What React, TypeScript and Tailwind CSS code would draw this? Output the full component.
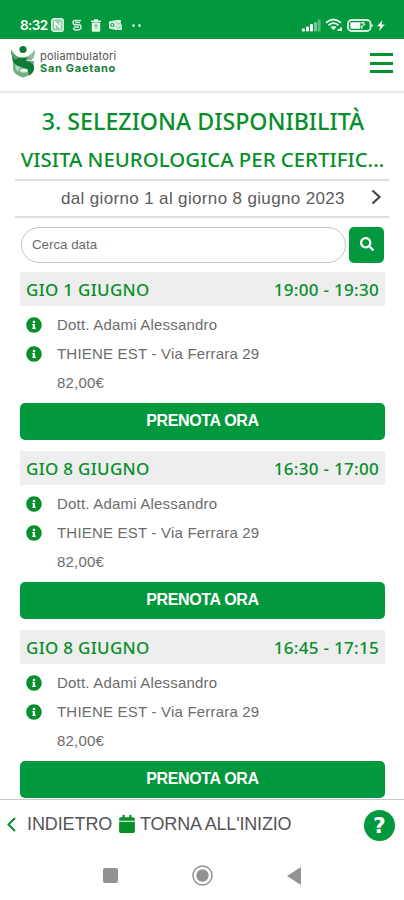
import { FaCalendar, FaInfoCircle, FaSearch } from 'react-icons/fa';

const slots = [
  { day: 'GIO 1 GIUGNO', time: '19:00 - 19:30' },
  { day: 'GIO 8 GIUGNO', time: '16:30 - 17:00' },
  { day: 'GIO 8 GIUGNO', time: '16:45 - 17:15' },
];

function StatusBar() {
  return (
    <div className="h-[39px] shrink-0 bg-[#02983d] flex items-center justify-between pl-5 pr-[19px] pt-[11px] text-white">
      <div className="flex items-center">
        <span className="w-[28px] font-['Inter'] text-[13.5px] leading-4 font-semibold tracking-[-0.6px] whitespace-nowrap">8:32</span>
        <svg className="ml-[3px]" width="13" height="14" viewBox="0 0 13 14" fill="none" stroke="#e3f6e8">
          <rect x=".8" y=".8" width="11.4" height="12.4" rx="2" fill="#8fcfa4" strokeWidth="1.4" />
          <path d="M4 10.5V4l5 6V3.5" stroke="#fff" strokeWidth="1.3" />
        </svg>
        <svg className="ml-[8px]" width="10" height="12" viewBox="0 0 10 12" fill="none" stroke="#d4efdc" strokeWidth="1.5">
          <path d="M9 1.5H3Q1 1.5 1 3.5T3 5.7h4q2 0 2 2.3t-3 3H3L1 9M3 3.6h5M2 8h5" />
        </svg>
        <svg className="ml-[9px]" width="10" height="13" viewBox="0 0 10 13" fill="#e3f6e8">
          <path d="M0 1.5h3V.3h4v1.2h3V3H0zM.8 3.5h8.4V12q0 .8-.8.8H1.6q-.8 0-.8-.8z" />
          <path d="M5 5v5M3.5 7.5 5 5.5l1.5 2" fill="none" stroke="#5dbc7c" />
        </svg>
        <svg className="ml-[8px]" width="13" height="12" viewBox="0 0 13 12" fill="#d4efdc">
          <path d="M0 2.5 7 1v10L0 9.5zM7 1h5v6H7zM7 7.5l6-2V11H7z" />
          <circle cx="3.4" cy="6" r="1.6" fill="none" stroke="#02983d" />
          <path d="m7 3 2.5 2.5L12 3M8 10l4-3" fill="none" stroke="#6cc287" strokeWidth=".9" />
        </svg>
        <span className="ml-[10px] flex gap-[3px]">
          <i className="size-[3px] rounded-full bg-[#bfe5c9]" />
          <i className="size-[3px] rounded-full bg-[#bfe5c9]" />
        </span>
      </div>
      <div className="flex items-center">
        <svg width="19" height="13" viewBox="0 0 19 13" fill="#fff">
          <rect x="0" y="9.5" width="3" height="3" rx="1" />
          <rect x="4" y="7.5" width="3" height="5" rx="1" />
          <rect x="8" y="5" width="3" height="7.5" rx="1" />
          <rect x="12" y="3" width="3" height="9.5" rx="1" opacity=".45" />
          <rect x="15.6" y=".5" width="3" height="12" rx="1" opacity=".35" />
        </svg>
        <svg className="ml-[4px]" width="18" height="14" viewBox="0 0 18 14" fill="none" stroke="#e6f6ea" strokeWidth="1.8">
          <path d="M1 4.7Q8.5-1.8 16 4.7M3.5 7.3q5-4.4 10 0" />
          <path d="m5.5 9 3 3.2 3-3.2q-3-2.2-6 0z" fill="#e6f6ea" stroke="none" />
          <path d="M12.5 12H16V9.5" strokeWidth="2" />
        </svg>
        <svg className="ml-[4px]" width="27" height="13" viewBox="0 0 27 13" fill="none">
          <rect x="1" y="1" width="22.5" height="11" rx="3.5" stroke="#d9f1df" strokeWidth="1.8" />
          <path d="M24.5 4.5q2.5 2 0 4z" fill="#fff" />
          <rect x="3.3" y="3.2" width="10" height="6.6" rx="1.2" fill="#fff" />
          <path d="m13.5 4 3-.5 1 2-3 2 .5 2.5" stroke="#d9f1df" strokeWidth="1.3" />
        </svg>
        <svg className="ml-[3px]" width="8" height="11" viewBox="0 0 8 11" fill="#e6f6ea">
          <path d="M5.5 0 0 6.2h3L2.2 11 7.8 4.5H4.6z" />
        </svg>
      </div>
    </div>
  );
}

function Logo() {
  return (
    <svg className="mt-[6px]" width="26" height="33" viewBox="0 0 26 33">
      <path d="M25 4.5q.5 8-4 11h-7l-3-3q9 0 14-8z" fill="#8dbb9a" />
      <path d="M3 16v8q1 6 10 8.5Q23 30 24 24v-8z" fill="#6faf82" />
      <path d="M5 19q5 3 9 3-5 0-6 5-3-3-3-8z" fill="#b5d6be" />
      <path d="M1 4.5q3 6.5 9 8 5 .5 10 0-4 1-4 3 8 2 8 8 0 4-5 7 0-6-7-8Q2 20 2 12z" fill="#107a34" />
      <path d="M1 4.5q3 6.5 9 8l-5 2Q1 11 1 4.5z" fill="#5f9f73" />
      <ellipse cx="14" cy="25.5" rx="4" ry="2" fill="#e4f1e7" />
      <circle cx="13" cy="4.5" r="3.6" fill="#0b7a33" />
    </svg>
  );
}

function Header() {
  return (
    <header className="h-[54px] shrink-0 flex items-start justify-between border-b-2 border-[#e8e8e8] pl-[10px] pr-[11px]">
      <div className="flex">
        <Logo />
        <div className="ml-[4px] mt-[11px] font-['Inter'] whitespace-nowrap">
          <p className="text-[11px] leading-[13px] text-[#4f5650] tracking-[0.2px]">poliambulatori</p>
          <p className="text-[11px] leading-[11px] text-[#16803a] font-bold tracking-[0.7px]">San Gaetano</p>
        </div>
      </div>
      <div className="mt-[14px] w-[23px] flex flex-col gap-[5.5px]">
        <span className="h-[3px] bg-[#06912f]" />
        <span className="h-[3px] bg-[#06912f]" />
        <span className="h-[3px] bg-[#06912f]" />
      </div>
    </header>
  );
}

function Slot({ day, time }: { day: string; time: string }) {
  return (
    <section className="h-[179px] shrink-0 pl-5 pr-[19px] text-[#6c6c6c]">
      <div className="h-[34px] bg-[#eeeeee] flex items-center justify-between px-[6px] pt-px font-['Noto_Sans'] font-medium text-[17px] text-[#078f2b]">
        <span className="tracking-[0.3px]">{day}</span>
        <span className="tracking-[0.3px]">{time}</span>
      </div>
      <div className="pt-[4px] text-[15px] leading-[29px]">
        <p className="flex items-center">
          <FaInfoCircle className="ml-[6px] mr-[15px] size-4 text-[#078f2b]" />
          <span className="tracking-[0.2px]">Dott. Adami Alessandro</span>
        </p>
        <p className="flex items-center">
          <FaInfoCircle className="ml-[6px] mr-[15px] size-4 text-[#078f2b]" />
          <span className="tracking-[0.2px]">THIENE EST - Via Ferrara 29</span>
        </p>
        <p className="pl-[37px] tracking-[0.2px]">82,00€</p>
      </div>
      <button className="mt-[6px] block w-full h-[37px] rounded-[5px] bg-[#02983d] text-white font-bold text-[16px] tracking-[-0.35px] leading-[35px] pb-[2px]">
        PRENOTA ORA
      </button>
    </section>
  );
}

export default function App() {
  return (
    <div className="w-[404px] h-[900px] flex flex-col overflow-hidden bg-white font-['Liberation_Sans',sans-serif]">
      <StatusBar />
      <Header />
      <main className="h-[706px] shrink-0 overflow-hidden flex flex-col">
        <div className="h-[86px] shrink-0 text-center font-['Noto_Sans'] font-medium text-[#078f2b] whitespace-nowrap">
          <h1 className="pt-[8px] pl-[2px] text-[23.2px] leading-[40px]">3. SELEZIONA DISPONIBILITÀ</h1>
          <h2 className="pl-px text-[20.4px] leading-[37px]">VISITA NEUROLOGICA PER CERTIFIC...</h2>
        </div>
        <div className="mx-[15px] h-[39px] shrink-0 border-y-2 border-[#dedede] flex items-center pl-[46px] text-[17px] tracking-[0.35px] text-[#5c5c5c] whitespace-nowrap">
          <span className="w-[283px]">dal giorno 1 al giorno 8 giugno 2023</span>
          <svg className="ml-[27px] -mt-[3px]" width="11" height="16" viewBox="0 0 11 16" fill="none" stroke="#444" strokeWidth="2.2">
            <path d="m1.5 1.5 7 6.5-7 6.5" />
          </svg>
        </div>
        <div className="mt-[9px] mb-[9px] h-[36px] shrink-0 flex pl-[21px] pr-5 gap-[3px]">
          <div className="flex-1 rounded-full border-[1.5px] border-[#c4c4c4] pl-[10px] flex items-center text-[13.3px] text-[#6c6c6c]">Cerca data</div>
          <button className="w-[35px] rounded-[5px] bg-[#02983d] text-white flex items-center justify-center pb-[3px]">
            <FaSearch className="size-[14px]" />
          </button>
        </div>
        {slots.map((slot) => (
          <Slot key={slot.time} {...slot} />
        ))}
      </main>
      <footer className="h-[52px] shrink-0 border-t border-[#c9c9c9] flex items-center pl-[7px] pr-[9px] text-[18px] text-[#555] whitespace-nowrap">
        <svg className="-mt-[3px]" width="9" height="15" viewBox="0 0 9 15" fill="none" stroke="#078f2b" strokeWidth="2">
          <path d="M8 1 1.5 7.5 8 14" />
        </svg>
        <span className="ml-[11px] -mt-[2px] w-[85px] tracking-[-0.1px]">INDIETRO</span>
        <FaCalendar className="ml-[7px] -mt-[4px] h-[18px] w-4 text-[#078f2b]" />
        <span className="ml-[5px] -mt-[2px] tracking-[-0.17px]">TORNA ALL'INIZIO</span>
        <span className="ml-auto size-[31px] rounded-full bg-[#02983d] flex items-center justify-center font-['DejaVu_Sans'] font-bold text-[22px] leading-none text-white">
          ?
        </span>
      </footer>
      <nav className="flex-1 flex items-center pl-[103px]">
        <span className="size-[15px] rounded-[2px] bg-[#929292]" />
        <svg className="ml-[74px]" width="21" height="21" viewBox="0 0 21 21">
          <circle cx="10.5" cy="10.5" r="9.5" fill="none" stroke="#929292" strokeWidth="1.5" />
          <circle cx="10.5" cy="10.5" r="6.2" fill="#929292" />
        </svg>
        <svg className="ml-[74px]" width="14" height="18" viewBox="0 0 14 18" fill="#929292">
          <path d="M14 0v18L0 9z" />
        </svg>
      </nav>
    </div>
  );
}
